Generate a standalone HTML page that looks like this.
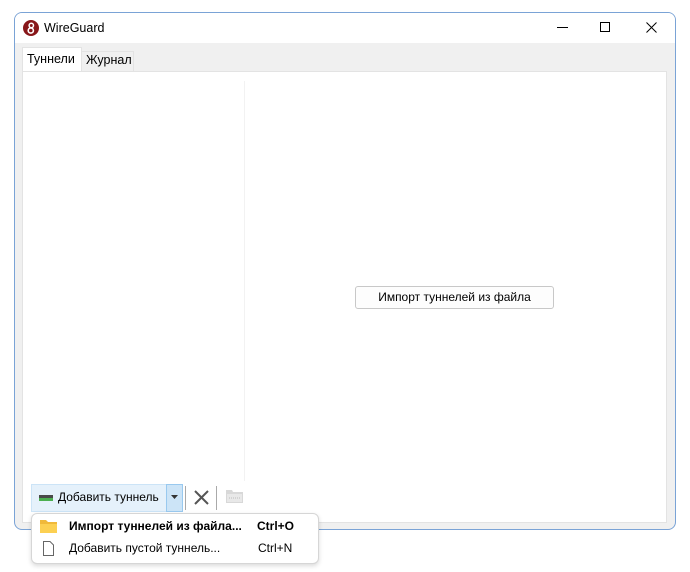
<!DOCTYPE html>
<html><head><meta charset="utf-8"><style>
*{margin:0;padding:0;box-sizing:border-box}
body{width:690px;height:572px;background:#fff;position:relative;overflow:hidden;font-family:"Segoe UI","Liberation Sans",sans-serif;font-size:12px;color:#000}
.win{position:absolute;left:14px;top:12px;width:662px;height:518px;border:1px solid #7aa3d6;border-radius:8px;background:#f0f0f0;overflow:hidden}
.title{position:absolute;left:0;top:0;width:100%;height:30px;background:#fff}
.title .t{position:absolute;left:29px;top:8px;font-size:12.5px}
.tab{position:absolute;top:35px;height:24px;padding:4px 4px 0;font-size:12.5px}
.panel{position:absolute;left:7px;top:58px;width:645px;height:452px;background:#fff;border:1px solid #e3e3e3}
.btn{position:absolute;left:332px;top:214px;width:199px;height:23px;border:1px solid #c8c8c8;border-radius:3px;background:#fdfdfd;text-align:center;line-height:21px;font-size:12px}
.abs{position:absolute}
.menu{position:absolute;left:31px;top:513px;width:288px;height:51px;background:#fff;border:1px solid #d6d6d6;border-radius:6px;box-shadow:0 2px 5px rgba(0,0,0,.15)}
</style></head><body>
<div class="win">
 <div class="title">
  <svg class="abs" style="left:8px;top:7px" width="16" height="16" viewBox="0 0 16 16"><circle cx="8" cy="8" r="8" fill="#88171a"/><circle cx="8.3" cy="5.5" r="2.2" fill="none" stroke="#fff" stroke-width="1.5"/><circle cx="7.8" cy="10.5" r="2.6" fill="none" stroke="#fff" stroke-width="1.6"/></svg>
  <div class="t">WireGuard</div>
  <div class="abs" style="left:542px;top:14px;width:11px;height:1px;background:#000"></div>
  <div class="abs" style="left:585px;top:9px;width:10px;height:10px;border:1px solid #000"></div>
  <svg class="abs" style="left:631px;top:9px" width="11" height="11"><path d="M0.5 0.5L10.5 10.5M10.5 0.5L0.5 10.5" stroke="#000" stroke-width="1"/></svg>
 </div>
 <div class="tab" style="left:7px;width:60px;background:#fff;top:34px;height:26px;border:1px solid #e3e3e3;border-bottom:none">Туннели</div>
 <div class="tab" style="left:67px;width:52px;background:#f0f0f0;border:1px solid #e3e3e3;border-left:none;border-bottom:none;top:38px;height:20px;padding-top:1px">Журнал</div>
 <div class="panel">
  <div class="abs" style="left:221px;top:9px;width:1px;height:400px;background:#f2f2f2"></div>
  <div class="btn">Импорт туннелей из файла</div>
 </div>
</div>
<div class="abs" style="left:31px;top:484px;width:136px;height:28px;background:#e5f1fb;border:1px solid #cce4f7;border-right:none"></div>
<div class="abs" style="left:166px;top:484px;width:17px;height:28px;background:#cce4f7;border:1px solid #99c9ef"></div>
<svg class="abs" style="left:171px;top:495px" width="7" height="4"><path d="M0 0H7L3.5 4Z" fill="#333"/></svg>
<div class="abs" style="left:39px;top:495px;width:14px;height:6px;background:#4a4a4a;border-bottom:3px solid #4caf50"></div>
<div class="abs" style="left:58px;top:490px;font-size:12px">Добавить туннель</div>
<div class="abs" style="left:185px;top:486px;width:1px;height:24px;background:#aaa"></div>
<svg class="abs" style="left:194px;top:490px" width="15" height="15"><path d="M1 1L14 14M14 1L1 14" stroke="#555" stroke-width="2"/></svg>
<div class="abs" style="left:216px;top:486px;width:1px;height:24px;background:#aaa"></div>
<svg class="abs" style="left:226px;top:489px" width="17" height="14"><path d="M0 1H6L7 3H17V14H0Z" fill="#d8d8d8"/><rect x="1" y="5" width="15" height="8" fill="#e8e8e8"/><path d="M3 9H14" stroke="#bbb" stroke-dasharray="1 1"/></svg>
<div class="menu">
 <svg class="abs" style="left:8px;top:6px" width="17" height="13"><path d="M0 0H6L8 2H17V13H0Z" fill="#f0b93a"/><rect x="0" y="4" width="17" height="9" fill="#fcd052"/></svg>
 <div class="abs" style="left:37px;top:5px;font-weight:bold;font-size:12px">Импорт туннелей из файла...</div>
 <div class="abs" style="left:225px;top:5px;font-weight:bold;font-size:12px">Ctrl+O</div>
 <svg class="abs" style="left:11px;top:27px" width="11" height="15"><path d="M0.5 0.5H7L10.5 4V14.5H0.5Z" fill="#fff" stroke="#666"/></svg>
 <div class="abs" style="left:37px;top:27px;font-size:12px">Добавить пустой туннель...</div>
 <div class="abs" style="left:226px;top:27px;font-size:12px">Ctrl+N</div>
</div>
</body></html>
